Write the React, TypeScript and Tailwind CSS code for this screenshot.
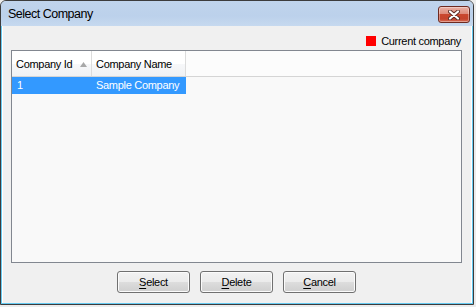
import React from 'react'

const font = { fontFamily: '"Liberation Sans", Arial, sans-serif' }

function CloseButton() {
  return (
    <div className="relative flex h-[17px] w-[32px] items-center justify-center rounded-[3px] border border-[#6e2a20] bg-[linear-gradient(#eab1a5_0%,#de8b7b_45%,#c9472f_50%,#c5432c_80%,#d8735c_100%)] shadow-[inset_0_0_0_1px_rgba(255,255,255,0.35)]">
      <svg width="12" height="10" viewBox="0 0 12 10">
        <path d="M2 1.5 L10 8.5 M10 1.5 L2 8.5" stroke="#5a2a24" strokeWidth="4" strokeLinecap="round" />
        <path d="M2 1.5 L10 8.5 M10 1.5 L2 8.5" stroke="#ffffff" strokeWidth="2.2" strokeLinecap="round" />
      </svg>
    </div>
  )
}

function WinButton({ hot, rest }: { hot: string; rest: string }) {
  return (
    <button className="h-[22px] w-[73px] rounded-[3px] border border-[#707070] bg-[linear-gradient(#f2f2f2_0%,#ebebeb_50%,#dddddd_50%,#cfcfcf_100%)] text-[11px] leading-none tracking-[-0.3px] text-black shadow-[inset_0_0_0_1px_#fbfbfb]">
      <span className="underline underline-offset-[2px]">{hot}</span>
      {rest}
    </button>
  )
}

export default function App() {
  return (
    <div className="h-[307px] w-[476px] bg-[#ececec]" style={font}>
      <div className="flex h-[305px] w-[474px] flex-col overflow-hidden rounded-t-[6px] border border-[#3c3c3c] bg-[linear-gradient(90deg,#b3cbe8_0%,#c2d6ee_50%,#cbdcf1_100%)]">
        {/* title bar */}
        <div className="flex h-[25px] shrink-0 items-start justify-between bg-[linear-gradient(#c0d4ec_0%,#bcd1eb_60%,#c6d9ef_100%)] pl-[7px] pr-[3px]">
          <span className="pt-[7px] text-[12.5px] leading-none tracking-[-0.5px] text-black">Select Company</span>
          <div className="pt-[5px]">
            <CloseButton />
          </div>
        </div>

        {/* client area */}
        <div className="flex flex-1 flex-col border-x border-b border-[#66caf1] bg-[#f0f0f0] shadow-[inset_1px_0_0_#ffffff,inset_-1px_0_0_#ffffff] pl-[9px] pr-[10px]">
          <div className="mt-[10px] flex h-[10px] items-center justify-end gap-[5px] pr-[1px]">
            <div className="size-[10px] bg-[#ff0000]" />
            <span className="text-[11px] leading-none tracking-[-0.3px] text-black">Current company</span>
          </div>

          <div className="mt-[4px] h-[213px] border border-[#828790] bg-[#f9f9f9]">
            <div className="flex h-[26px] border-b border-[#d5d5d5] bg-[linear-gradient(#ffffff_0%,#ffffff_50%,#f7f8fa_51%,#f1f2f4_100%)] text-[11px] tracking-[-0.3px] text-black">
              <div className="flex w-[80px] items-center justify-between border-r border-[#dcdcdc] pl-[4px] pr-[4px] pt-[1px]">
                <span>Company Id</span>
                <svg width="7" height="5" viewBox="0 0 7 5">
                  <path d="M3.5 0 L7 5 L0 5 Z" fill="#a8a8a8" />
                </svg>
              </div>
              <div className="flex w-[94px] items-center border-r border-[#dcdcdc] pl-[4px] pt-[1px]">
                <span>Company Name</span>
              </div>
              <div className="flex-1 bg-[#fcfcfc]" />
            </div>
            <div className="flex h-[17px] w-[174px] items-center bg-[#3399ff] text-[11px] tracking-[-0.3px] text-white">
              <div className="w-[80px] pl-[5px]">1</div>
              <div className="w-[94px] pl-[4px]">Sample Company</div>
            </div>
          </div>

          <div className="mt-[8px] flex justify-center gap-[10px]">
            <WinButton hot="S" rest="elect" />
            <WinButton hot="D" rest="elete" />
            <WinButton hot="C" rest="ancel" />
          </div>
        </div>
      </div>
    </div>
  )
}
